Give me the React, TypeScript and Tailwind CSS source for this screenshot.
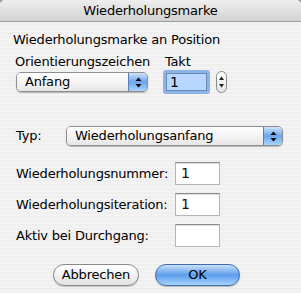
import React from 'react';

/** Kleiner Auf/Ab-Pfeil wie im Aqua-Popup */
function Pfeile({ className = '' }: { className?: string }) {
  return (
    <svg width="7" height="11" viewBox="0 0 7 11" className={className}>
      <path d="M3.5 0.5 L6.5 4 L0.5 4 Z" fill="currentColor" />
      <path d="M3.5 10.5 L6.5 7 L0.5 7 Z" fill="currentColor" />
    </svg>
  );
}

/** Aqua-Popup-Button */
function Popup({ text, breite }: { text: string; breite: string }) {
  return (
    <div
      className={`${breite} h-[20px] flex rounded-[5px] border border-[#8e8e8e] shadow-[0_1px_1px_rgba(0,0,0,0.25)] overflow-hidden`}
    >
      <div className="flex-1 bg-gradient-to-b from-[#ffffff] via-[#f4f4f4] to-[#e6e6e6] pl-[8px] leading-[18px]">
        {text}
      </div>
      <div className="w-[19px] flex items-center justify-center border-l border-[#5a7fb8] bg-gradient-to-b from-[#cfe3fb] via-[#6aa4ec] to-[#a9d3ff] text-black">
        <Pfeile />
      </div>
    </div>
  );
}

/** Zahlenfeld */
function Feld({ wert }: { wert?: string }) {
  return (
    <div className="w-[45px] h-[23px] bg-white border border-[#b5b5b5] border-t-[#8a8a8a] shadow-[inset_0_1px_0_#e0e0e0] pl-[5px] text-[14px] text-[#111] leading-[21px]">
      {wert}
    </div>
  );
}

function Zeile({ label, wert }: { label: string; wert?: string }) {
  return (
    <div className="flex items-center h-[23px]">
      <div className="w-[159px]">{label}</div>
      <Feld wert={wert} />
    </div>
  );
}

export default function App() {
  return (
    <div className="w-[301px] h-[293px] bg-[#9a9a9a] text-[13px] tracking-[-0.2px] text-black font-['DejaVu_Sans',sans-serif] overflow-hidden">
      <div className="h-full rounded-t-[5px] overflow-hidden flex flex-col bg-[repeating-linear-gradient(180deg,#efefef_0px,#efefef_2px,#f3f3f3_2px,#f3f3f3_4px)]">
        {/* Titelleiste */}
        <div className="h-[22px] shrink-0 flex items-center justify-center bg-gradient-to-b from-[#eeeeee] to-[#d2d2d2] border-b border-[#9b9b9b]">
          Wiederholungsmarke
        </div>

        <div className="pl-[13px]">
          <div className="mt-[10px] h-[16px] leading-[16px]">Wiederholungsmarke an Position</div>

          {/* Orientierungszeichen / Takt */}
          <div className="flex mt-[6px]">
            <div className="ml-[2px] w-[148px] flex flex-col">
              <div className="h-[16px] leading-[16px] whitespace-nowrap">Orientierungszeichen</div>
              <div className="mt-[2px] ml-[1px]">
                <Popup text="Anfang" breite="w-[132px]" />
              </div>
            </div>
            <div className="flex flex-col">
              <div className="h-[16px] leading-[16px] ml-[2px]">Takt</div>
              <div className="flex items-center">
                <div className="w-[47px] h-[24px] rounded-[3px] bg-[#8db4e6] p-[3px]">
                  <div className="h-full bg-[#b8d6ff] border border-[#6a8bb8] pl-[3px] text-[14px] leading-[16px]">1</div>
                </div>
                <div className="ml-[6px] w-[11px] h-[22px] rounded-full border border-[#8a8a8a] bg-gradient-to-b from-[#ffffff] to-[#e4e4e4] flex items-center justify-center">
                  <svg width="5" height="12" viewBox="0 0 5 12">
                    <path d="M2.5 0.5 L5 4 L0 4 Z" fill="#222" />
                    <path d="M2.5 11.5 L5 8 L0 8 Z" fill="#222" />
                  </svg>
                </div>
              </div>
            </div>
          </div>

          {/* Typ */}
          <div className="flex items-center mt-[32px] ml-[3px]">
            <div className="w-[50px]">Typ:</div>
            <Popup text="Wiederholungsanfang" breite="w-[217px]" />
          </div>

          {/* Zahlenfelder */}
          <div className="ml-[3px] mt-[16px] flex flex-col gap-[8px]">
            <Zeile label="Wiederholungsnummer:" wert="1" />
            <Zeile label="Wiederholungsiteration:" wert="1" />
            <Zeile label="Aktiv bei Durchgang:" />
          </div>

          {/* Buttons */}
          <div className="flex mt-[17px] ml-[40px] gap-[16px]">
            <div className="w-[86px] h-[22px] rounded-full border border-[#8a8a8a] bg-gradient-to-b from-[#ffffff] via-[#f2f2f2] to-[#e0e0e0] shadow-[0_1px_1px_rgba(0,0,0,0.2)] flex items-center justify-center">
              Abbrechen
            </div>
            <div className="w-[85px] h-[22px] rounded-full border border-[#3e6bb0] bg-gradient-to-b from-[#c8e1fb] via-[#5d9ce9] to-[#a6d4ff] shadow-[0_1px_1px_rgba(0,0,0,0.25)] flex items-center justify-center">
              OK
            </div>
          </div>
        </div>
      </div>
    </div>
  );
}
